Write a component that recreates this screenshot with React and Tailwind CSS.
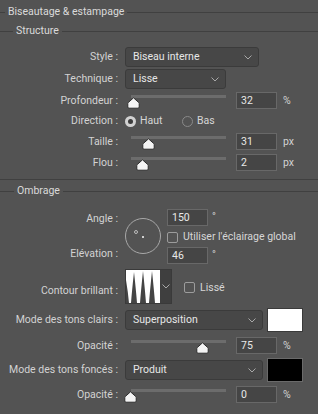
import React from "react";

const Chevron = () => (
  <svg width="8" height="5" viewBox="0 0 8 5" className="shrink-0">
    <path d="M0.5 0.5 L4 4 L7.5 0.5" fill="none" stroke="#a8a8a8" strokeWidth="1" />
  </svg>
);

const Thumb = () => (
  <svg width="13" height="12" viewBox="0 0 13 12">
    <path
      d="M6.5 0.8 L11.8 5.6 Q12.2 6 12.2 6.6 L12.2 10 Q12.2 11.2 11 11.2 L2 11.2 Q0.8 11.2 0.8 10 L0.8 6.6 Q0.8 6 1.2 5.6 Z"
      fill="#f4f4f4"
      stroke="#2e2e2e"
      strokeWidth="1"
    />
  </svg>
);

const Legend = ({ text, lead, className }) => (
  <div className={`flex items-center ${className}`}>
    <div className={`h-px bg-[#404040] ${lead}`} />
    <span className="px-[3px] text-[#dadada]">{text}</span>
    <div className="h-px flex-1 bg-[#404040]" />
  </div>
);

const Row = ({ label, h, className = "", children }) => (
  <div className={`flex items-center ${h} ${className}`}>
    <div className="w-[118px] shrink-0 text-right text-[#d2d2d2]">{label}</div>
    <div className="ml-[7px] flex items-center">{children}</div>
  </div>
);

const Select = ({ value, w }) => (
  <div
    className={`flex h-[20px] items-center justify-between rounded-[3px] border border-[#3b3b3b] bg-[#474747] pl-[7px] pr-[6px] text-[#e6e6e6] ${w}`}
  >
    <span>{value}</span>
    <Chevron />
  </div>
);

const NumBox = ({ value, w = "w-[41px]" }) => (
  <div
    className={`flex h-[17px] items-center border border-[#686868] bg-[#454545] pl-[4px] text-[#e8e8e8] ${w}`}
  >
    {value}
  </div>
);

const Slider = ({ pos, h }) => (
  <div className={`relative w-[101px] shrink-0 ${h}`}>
    <div className="absolute left-[6px] right-0 top-[5px] h-[3px] bg-[#6c6c6c]" />
    <div className="absolute top-[7px]" style={{ left: pos - 6.5 }}>
      <Thumb />
    </div>
  </div>
);

const SliderRow = ({ label, pos, value, unit, className = "" }) => (
  <Row label={label} h="h-[21px]" className={className}>
    <Slider pos={pos} h="h-[21px]" />
    <div className="ml-[10px]">
      <NumBox value={value} />
    </div>
    <span className="ml-[6px] text-[#d2d2d2]">{unit}</span>
  </Row>
);

const Checkbox = () => (
  <div className="h-[11px] w-[11px] rounded-[2px] border border-[#9c9c9c]" />
);

const Contour = () => (
  <div className="flex h-[35px] w-[47px] border border-[#3a3a3a] bg-[#3f3f3f]">
    <svg width="34" height="33" viewBox="0 0 34 33" className="bg-white">
      <path
        d="M0 33 L0 10 Q2 22 3 33 L5 33 Q6 20 8 2 Q10 20 11 33 L14 33 Q15 20 17 1 Q19 20 20 33 L23 33 Q24 20 26 1 Q28 20 29 33 Z"
        fill="#444444"
      />
    </svg>
    <div className="flex flex-1 items-center justify-center">
      <Chevron />
    </div>
  </div>
);

export default function App() {
  return (
    <div
      className="h-[414px] w-[318px] overflow-hidden bg-[#535353] text-[10.5px] leading-[14px]"
      style={{ fontFamily: 'Roboto, "Liberation Sans", sans-serif' }}
    >
      <Legend text="Biseautage & estampage" lead="w-[5px]" className="h-[24px]" />
      <Legend text="Structure" lead="w-[13px]" className="h-[14px]" />

      <Row label="Style :" h="h-[22px]" className="mt-[8px]">
        <Select value="Biseau interne" w="w-[134px]" />
      </Row>
      <Row label="Technique :" h="h-[22px]">
        <Select value="Lisse" w="w-[101px]" />
      </Row>
      <SliderRow label="Profondeur :" pos={8} value="32" unit="%" />
      <Row label="Direction :" h="h-[20px]">
        <div className="flex h-[11px] w-[11px] items-center justify-center rounded-full bg-[#d2d2d2]">
          <div className="h-[5px] w-[5px] rounded-full bg-[#3c3c3c]" />
        </div>
        <span className="ml-[4px] w-[42px] text-[#d6d6d6]">Haut</span>
        <div className="h-[11px] w-[11px] rounded-full border border-[#8a8a8a]" />
        <span className="ml-[4px] text-[#d6d6d6]">Bas</span>
      </Row>
      <SliderRow label="Taille :" pos={23} value="31" unit="px" />
      <SliderRow label="Flou :" pos={17} value="2" unit="px" />

      <div className="mt-[6px] h-px bg-[#404040]" />
      <Legend text="Ombrage" lead="w-[14px]" className="mt-[4px] h-[14px]" />

      <div className="mt-[7px] flex h-[59px]">
        <div className="flex w-[118px] shrink-0 flex-col text-right text-[#d2d2d2]">
          <span className="mt-[7px]">Angle :</span>
          <span className="mt-[21px]">Elévation :</span>
        </div>
        <div className="relative ml-[7px] mt-[13px] h-[36px] w-[36px] rounded-full border border-[#a8a8a8]">
          <div className="absolute left-[8px] top-[11px] h-[4px] w-[4px] rounded-full border border-[#bdbdbd]" />
          <div className="absolute left-[16px] top-[17px] h-[2px] w-[2px] bg-[#cfcfcf]" />
        </div>
        <div className="ml-[6px] flex flex-col">
          <div className="mt-[4px] flex">
            <NumBox value="150" />
            <span className="ml-[4px] mt-[3px] text-[#d2d2d2] leading-[10px]">°</span>
          </div>
          <div className="mt-[4px] flex h-[14px] items-center">
            <Checkbox />
            <span className="ml-[5px] text-[#d6d6d6]">Utiliser l'éclairage global</span>
          </div>
          <div className="mt-[3px] flex">
            <NumBox value="46" />
            <span className="ml-[4px] mt-[3px] text-[#d2d2d2] leading-[10px]">°</span>
          </div>
        </div>
      </div>

      <div className="mt-[5px] flex h-[35px] items-center">
        <div className="w-[118px] shrink-0 pt-[8px] text-right text-[#d2d2d2]">Contour brillant :</div>
        <div className="ml-[7px]">
          <Contour />
        </div>
        <div className="ml-[12px] mt-[2px]">
          <Checkbox />
        </div>
        <span className="ml-[5px] mt-[2px] text-[#d6d6d6]">Lissé</span>
      </div>

      <Row label="Mode des tons clairs :" h="h-[24px]" className="mt-[4px]">
        <Select value="Superposition" w="w-[138px]" />
        <div className="ml-[4px] h-[24px] w-[36px] border border-[#3a3a3a] bg-white" />
      </Row>
      <SliderRow label="Opacité :" pos={77} value="75" unit="%" className="mt-[3px]" />
      <Row label="Mode des tons foncés :" h="h-[24px]" className="mt-[2px]">
        <Select value="Produit" w="w-[138px]" />
        <div className="ml-[4px] h-[24px] w-[36px] border border-[#6a6a6a] bg-black" />
      </Row>
      <SliderRow label="Opacité :" pos={5} value="0" unit="%" className="mt-[2px]" />
    </div>
  );
}
